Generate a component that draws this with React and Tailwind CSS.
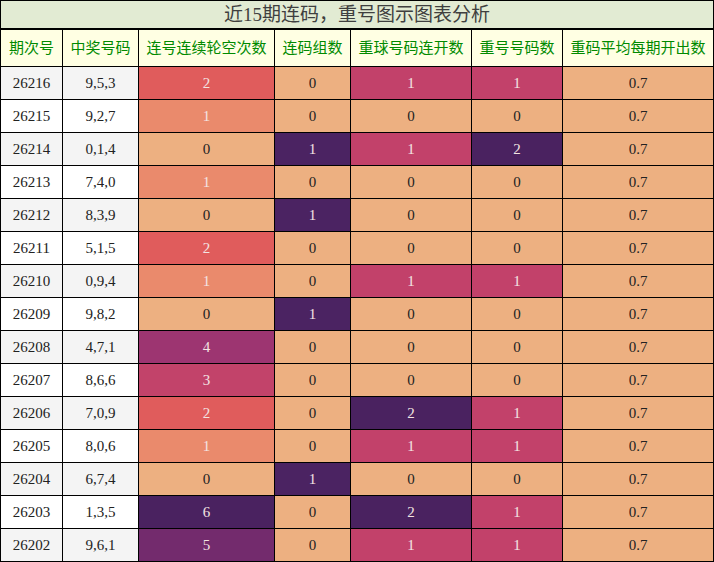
import React from "react";

const rows = [
  ["26216", "9,5,3", 2, 0, 1, 1],
  ["26215", "9,2,7", 1, 0, 0, 0],
  ["26214", "0,1,4", 0, 1, 1, 2],
  ["26213", "7,4,0", 1, 0, 0, 0],
  ["26212", "8,3,9", 0, 1, 0, 0],
  ["26211", "5,1,5", 2, 0, 0, 0],
  ["26210", "0,9,4", 1, 0, 1, 1],
  ["26209", "9,8,2", 0, 1, 0, 0],
  ["26208", "4,7,1", 4, 0, 0, 0],
  ["26207", "8,6,6", 3, 0, 0, 0],
  ["26206", "7,0,9", 2, 0, 2, 1],
  ["26205", "8,0,6", 1, 0, 1, 1],
  ["26204", "6,7,4", 0, 1, 0, 0],
  ["26203", "1,3,5", 6, 0, 2, 1],
  ["26202", "9,6,1", 5, 0, 1, 1],
];

const PEACH = "bg-[#edb081] text-[#222222]";
const LIGHT = "text-[#f3e4e2]";
const colA = {
  0: PEACH,
  1: "bg-[#ea8a6c] " + LIGHT,
  2: "bg-[#e05c5c] " + LIGHT,
  3: "bg-[#c2436a] " + LIGHT,
  4: "bg-[#9d3571] " + LIGHT,
  5: "bg-[#732b6d] " + LIGHT,
  6: "bg-[#4a2260] " + LIGHT,
};
const colB = {
  0: PEACH,
  1: "bg-[#4b2362] " + LIGHT,
};
const colC = {
  0: PEACH,
  1: "bg-[#c2416a] " + LIGHT,
  2: "bg-[#4a2260] " + LIGHT,
};

const headers = [
  "期次号",
  "中奖号码",
  "连号连续轮空次数",
  "连码组数",
  "重球号码连开数",
  "重号号码数",
  "重码平均每期开出数",
];

const cell = "flex items-center justify-center border-r border-b border-black";

export default function App() {
  return (
    <div
      className="w-[714px] h-[562px] bg-white overflow-hidden"
      style={{ fontFamily: '"Liberation Serif", "Noto Sans CJK SC", serif' }}
    >
      <div className="h-[29px] border border-black bg-[#e2ebd3] flex items-center justify-center text-[19px] text-[#3f3f3f] leading-none">
        近15期连码，重号图示图表分析
      </div>
      <div className="grid grid-cols-[62px_76px_136px_76px_121px_91px_151px] grid-rows-[37px_repeat(15,33px)] border-l border-t border-black text-[15px] leading-none">
        {headers.map((h) => (
          <div key={h} className={`${cell} bg-[#ffffe3] text-[#008a00]`}>
            {h}
          </div>
        ))}
        {rows.map((r, i) => {
          const base = i % 2 === 0 ? "bg-[#f4f4f4]" : "bg-white";
          return (
            <React.Fragment key={r[0]}>
              <div className={`${cell} ${base} text-[#222222]`}>{r[0]}</div>
              <div className={`${cell} ${base} text-[#222222]`}>{r[1]}</div>
              <div className={`${cell} ${colA[r[2]]}`}>{r[2]}</div>
              <div className={`${cell} ${colB[r[3]]}`}>{r[3]}</div>
              <div className={`${cell} ${colC[r[4]]}`}>{r[4]}</div>
              <div className={`${cell} ${colC[r[5]]}`}>{r[5]}</div>
              <div className={`${cell} ${PEACH}`}>0.7</div>
            </React.Fragment>
          );
        })}
      </div>
    </div>
  );
}
